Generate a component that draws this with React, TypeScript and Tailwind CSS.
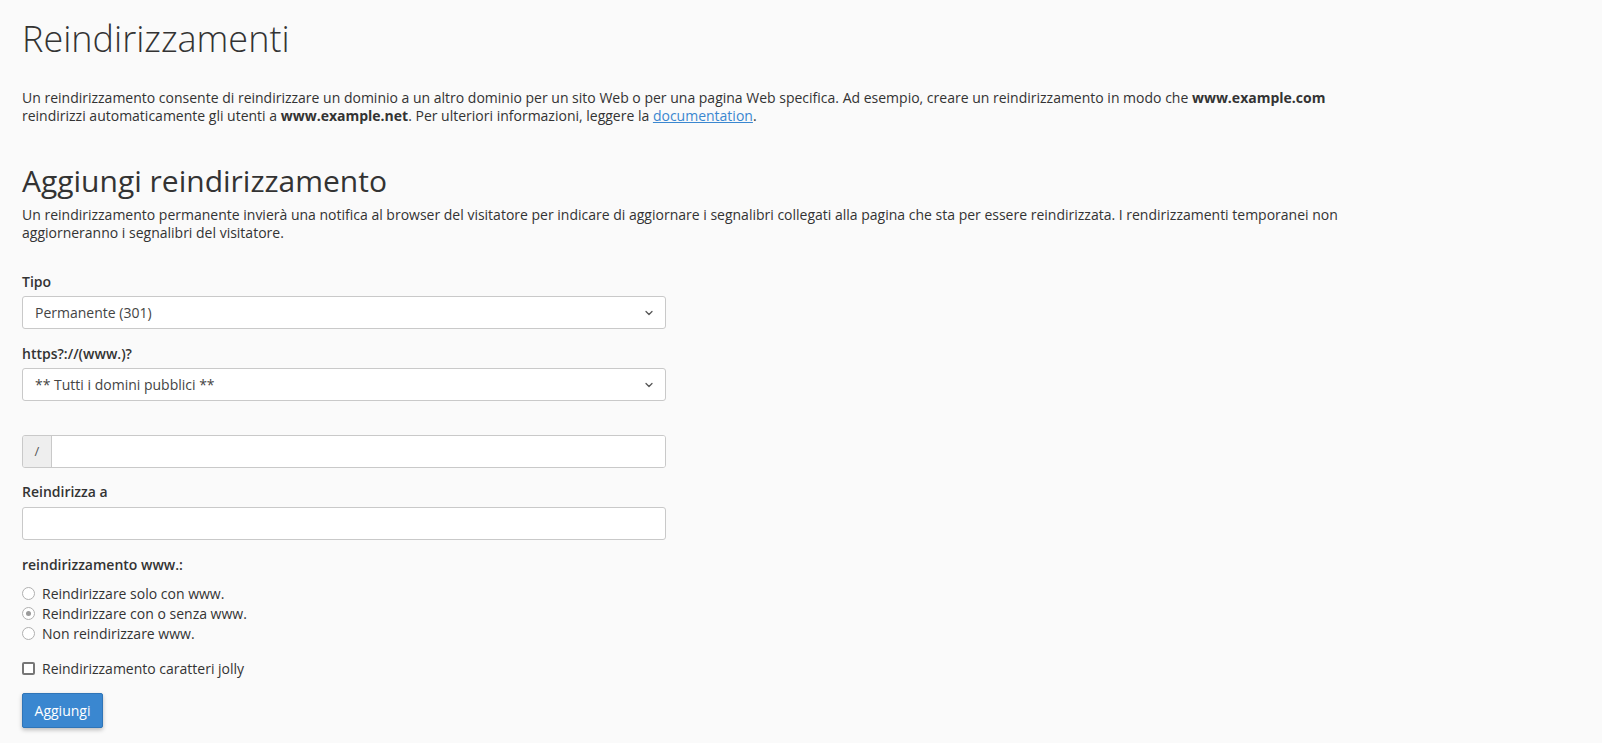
import { ChevronDown } from 'lucide-react';

const font = { fontFamily: '"Open Sans", "Liberation Sans", sans-serif' };

function Label({ children, className = 'mb-[4px]' }: { children: React.ReactNode; className?: string }) {
  return <div className={`text-[14px] font-semibold text-[#333] leading-5 ${className}`}>{children}</div>;
}

function Select({ value }: { value: string }) {
  return (
    <div className="w-[644px] h-[33px] bg-white border border-[#c9c9c9] rounded-[3px] flex items-center justify-between pl-3 pr-[10px] text-[14px] text-[#444]">
      <span>{value}</span>
      <ChevronDown size={12} strokeWidth={2.5} className="text-[#555]" />
    </div>
  );
}

function Radio({ label, checked }: { label: string; checked?: boolean }) {
  return (
    <label className="flex items-center gap-[7px] h-[20px] text-[14px] text-[#333]">
      <span className="w-[13px] h-[13px] rounded-full border border-[#b0b0b0] bg-white flex items-center justify-center">
        {checked && <span className="w-[5px] h-[5px] rounded-full bg-[#9a9a9a]" />}
      </span>
      {label}
    </label>
  );
}

export default function App() {
  return (
    <div className="min-h-screen bg-[#fafafa] text-[#333] px-[22px] pt-[14px]" style={font}>
      <h1 className="text-[36px] font-light leading-[50px] text-[#333]">Reindirizzamenti</h1>

      <p className="mt-[25px] text-[14px] leading-[18px] max-w-[1340px]">
        Un reindirizzamento consente di reindirizzare un dominio a un altro dominio per un sito Web o per una pagina Web specifica. Ad esempio, creare un reindirizzamento in modo che <b>www.example.com</b> reindirizzi automaticamente gli utenti a <b>www.example.net</b>. Per ulteriori informazioni, leggere la{' '}
        <a className="text-[#3a87d0] underline">documentation</a>.
      </p>

      <h2 className="mt-[36px] text-[30px] leading-[40px] text-[#333]">Aggiungi reindirizzamento</h2>
      <p className="mt-[5px] text-[14px] leading-[18px] max-w-[1340px]">
        Un reindirizzamento permanente invierà una notifica al browser del visitatore per indicare di aggiornare i segnalibri collegati alla pagina che sta per essere reindirizzata. I rendirizzamenti temporanei non aggiorneranno i segnalibri del visitatore.
      </p>

      <div className="mt-[30px]">
        <Label>Tipo</Label>
        <Select value="Permanente (301)" />
      </div>

      <div className="mt-[15px]">
        <Label>https?://(www.)?</Label>
        <Select value="** Tutti i domini pubblici **" />
      </div>

      <div className="mt-[34px] w-[644px] h-[33px] flex border border-[#c9c9c9] rounded-[3px] overflow-hidden">
        <div className="w-[29px] bg-[#eeeeee] border-r border-[#c9c9c9] flex items-center justify-center text-[13px] text-[#555]">/</div>
        <div className="flex-1 bg-white" />
      </div>

      <div className="mt-[14px]">
        <Label className="mb-[5px]">Reindirizza a</Label>
        <div className="w-[644px] h-[33px] bg-white border border-[#c9c9c9] rounded-[3px]" />
      </div>

      <div className="mt-[15px]">
        <Label className="mb-[8px]">reindirizzamento www.:</Label>
        <div className="flex flex-col">
          <Radio label="Reindirizzare solo con www." />
          <Radio label="Reindirizzare con o senza www." checked />
          <Radio label="Non reindirizzare www." />
        </div>
      </div>

      <label className="mt-[15px] flex items-center gap-[7px] h-[20px] text-[14px] text-[#333]">
        <span className="w-[13px] h-[13px] rounded-[2px] border-2 border-[#767676] bg-white" />
        Reindirizzamento caratteri jolly
      </label>

      <button className="mt-[15px] w-[81px] h-[35px] bg-[#3a87d0] border border-[#2f75b8] rounded-[2px] text-white text-[14px] shadow-[0_2px_4px_rgba(0,0,0,0.25)]">
        Aggiungi
      </button>
    </div>
  );
}
